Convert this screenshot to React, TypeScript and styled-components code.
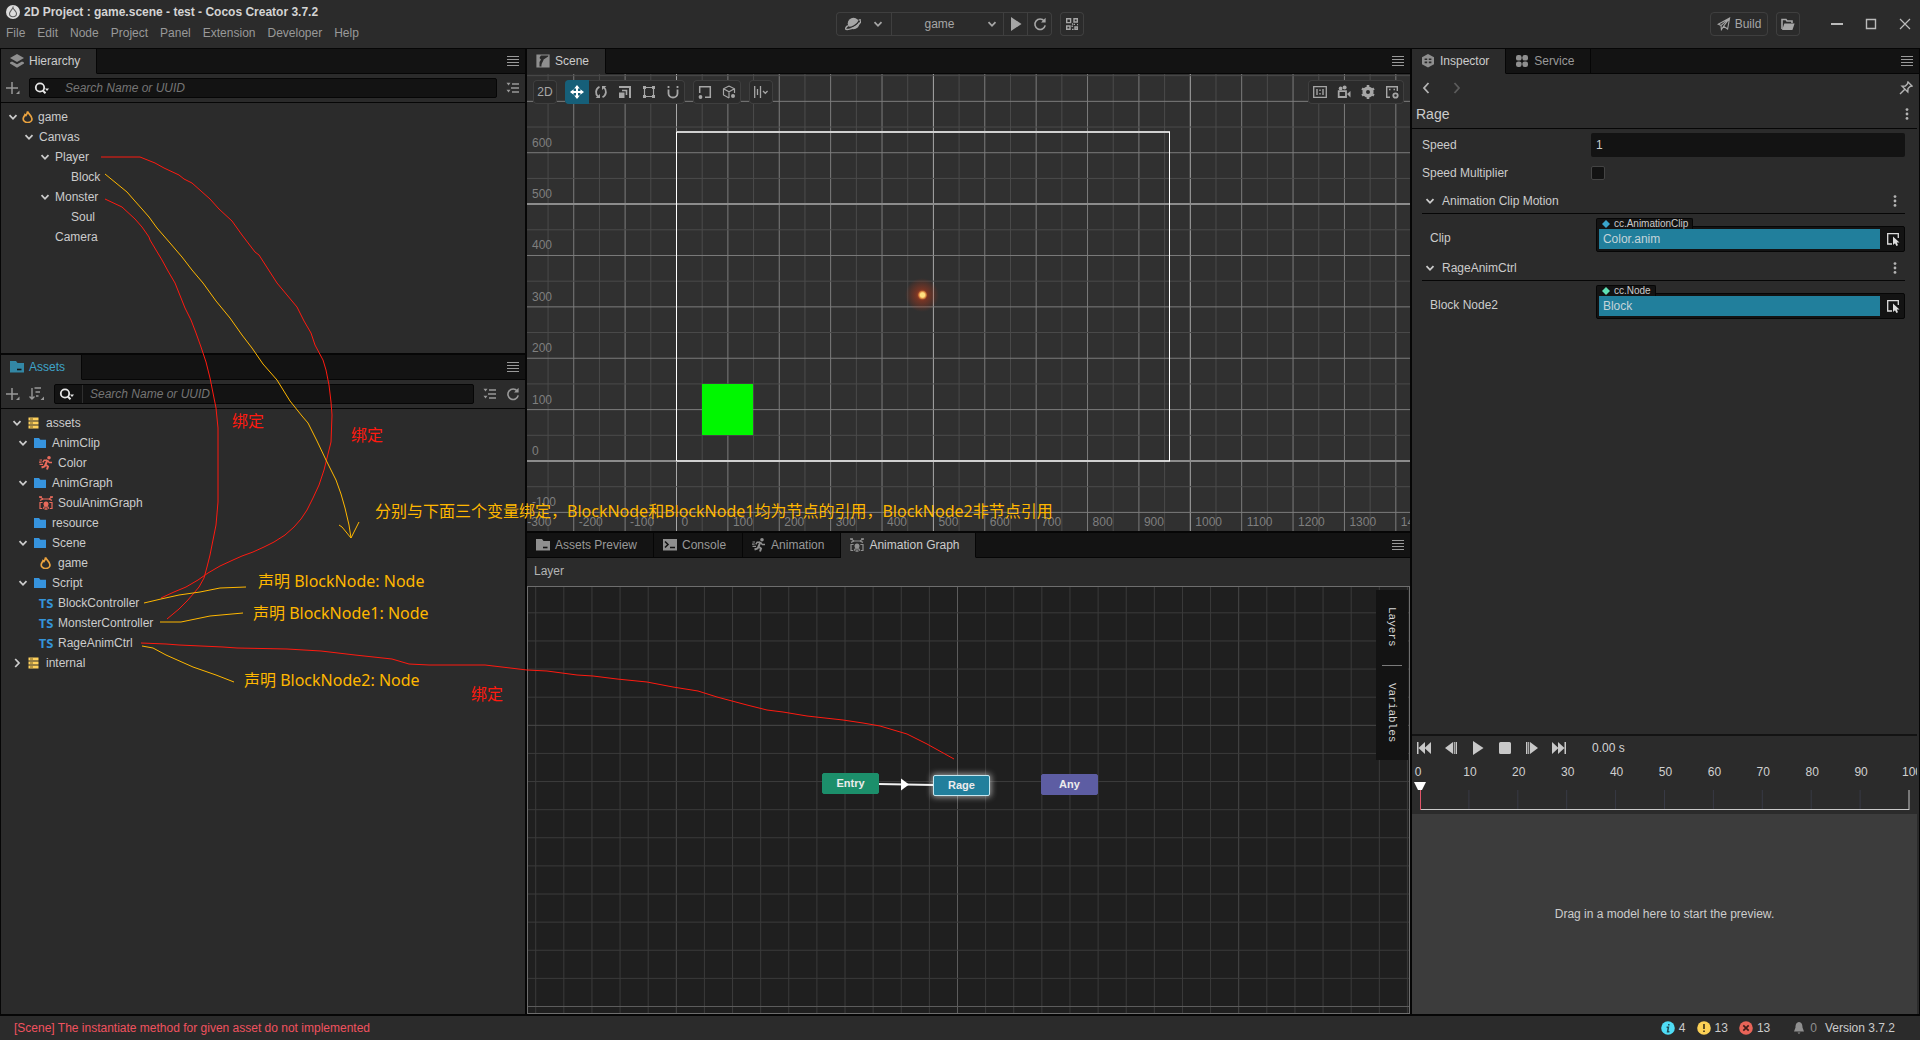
import React from "react";
import styled, { createGlobalStyle, css } from "styled-components";

const c = {
  panel: "#2b2b2b",
  bar: "#131313",
  line: "#060606",
  text: "#cccccc",
  dim: "#999999",
  border: "#3f3f3f",
  blue: "#217f9c",
  red: "#ff1a10",
  amber: "#ffb700",
};

const GlobalStyle = createGlobalStyle`
  *, *::before, *::after { box-sizing: border-box; }
  body { margin: 0; background: #000; overflow: hidden; }
  body, button, input, select {
    font-family: "Liberation Sans", Arial, "Noto Sans CJK SC", sans-serif;
    font-size: 12px;
    line-height: 16px;
  }
  button, input, select { color: inherit; margin: 0; padding: 0; border: 0; background: none; }
  svg { display: block; flex: none; }
`;

/* ---------- Icons ---------- */

type IconProps = { size?: number; box?: number; color?: string; children: React.ReactNode };
const Icon = ({ size = 14, box = 14, color = "currentColor", children }: IconProps) => (
  <svg width={size} height={size} viewBox={`0 0 ${box} ${box}`} fill="none" stroke={color} strokeWidth="1.4" aria-hidden="true">
    {children}
  </svg>
);

const Chevron = ({ open = true }: { open?: boolean }) => (
  <Icon size={10} box={10}>
    <path d={open ? "M1.5 3.2 5 6.8 8.5 3.2" : "M3.2 1 7 5 3.2 9"} strokeWidth="1.8" />
  </Icon>
);
const Burger = () => (
  <Icon size={12} box={12}>
    <path d="M0 1.5H12M0 4.5H12M0 7.5H12M0 10.5H12" strokeWidth="1" />
  </Icon>
);
const Kebab = () => (
  <Icon size={12} box={12}>
    <g fill="currentColor" stroke="none" opacity="0.85">
      <circle cx="6" cy="1.6" r="1.4" /><circle cx="6" cy="6" r="1.4" /><circle cx="6" cy="10.4" r="1.4" />
    </g>
  </Icon>
);
const LayersIcon = () => (
  <Icon>
    <path d="M7 0 14 4 7 8 0 4Z" fill="currentColor" stroke="none" />
    <path d="M0 8.6 2 7.4 7 10.2 12 7.4 14 8.6V9.6L7 13.8 0 9.6Z" fill="currentColor" stroke="none" />
  </Icon>
);
const FolderPanelIcon = () => (
  <Icon>
    <path d="M0 1H6L7.5 3H14V12.5H0Z" fill="currentColor" stroke="none" />
    <path d="M7 9.5H11.5" stroke="#131313" strokeWidth="1.6" />
  </Icon>
);
const SceneIcon = () => (
  <Icon>
    <path d="M1 1H13V13H1Z" strokeWidth="1.2" />
    <path d="M1 1H5L3.5 4 5 5.5 3.5 8V13H1Z" fill="currentColor" stroke="none" />
    <path d="M5.5 13C5.200 9 7 8.600 7.600 5.600L13 2V13Z" fill="currentColor" stroke="none" />
  </Icon>
);
const InspectorIcon = () => (
  <Icon>
    <path d="M7 0 13 3.3V10.2L7 13.6 1 10.2V3.3Z" fill="currentColor" stroke="none" />
    <path d="M3.6 5.2H6.2M7.8 5.2H10.4M3.6 8.4H6.2M7.8 8.4H10.4" stroke="#2b2b2b" strokeWidth="1.6" />
  </Icon>
);
const ServiceIcon = () => (
  <Icon>
    <g fill="currentColor" stroke="none">
      <rect x="1" y="1" width="5.6" height="5.6" rx="2.2" /><rect x="7.4" y="1" width="5.6" height="5.6" rx="2.2" />
      <rect x="1" y="7.4" width="5.6" height="5.6" rx="2.2" /><rect x="7.4" y="7.4" width="5.6" height="5.6" rx="2.2" />
    </g>
  </Icon>
);
const ConsoleIcon = () => (
  <Icon>
    <path d="M0 1H14V12.5H0Z" fill="currentColor" stroke="none" />
    <path d="M2 3.5 5 6.5 2 9.5M7 9.5H12" stroke="#131313" strokeWidth="1.6" />
  </Icon>
);
const RunIcon = () => (
  <Icon>
    <circle cx="10" cy="1.8" r="1.8" fill="currentColor" stroke="none" />
    <path d="M8.5 4 6.500 8.5 9 10.5 8 13.5M6.8 8.500 5.500 10.500 2.500 11.500" strokeWidth="2" />
    <path d="M8.3 4.2H5.2L3.8 6.4M8.8 4.6 10.3 6.6H13" strokeWidth="1.5" />
    <path d="M0.5 4H3M0 6.2H2.6M0.5 8.4H4" strokeWidth="1.2" />
  </Icon>
);
const GraphIcon = () => (
  <Icon>
    <circle cx="7" cy="8" r="2.500" fill="currentColor" stroke="none" />
    <path d="M1 1 4 3H10L13 1M1 4.4 4.2 3M13 4.4 9.8 3M3.6 6.5H1V12.5H3M10.4 6.5H13V12.5H11M4 12.8 5.2 10.8H8.8L10 12.8" strokeWidth="1.2" />
    <path d="M0 1H3M11 1H14M5.5 13H8.5" strokeWidth="1.6" />
  </Icon>
);
const FlameIcon = () => (
  <Icon size={12} box={12} color="#eba33f">
    <path d="M5.600 0.400C6 2.800 10 4.600 10 7.900A4.400 3.600 0 0 1 1.200 7.900C1.200 6 2.600 5.200 3 3.700L3.900 4.500C4.800 3.300 5.400 2 5.600 0.400Z" strokeWidth="1.7" />
  </Icon>
);
const DbIcon = () => (
  <Icon size={12} box={12} color="#fdd05c">
    <path d="M0.500 2H10.500M0.500 6H10.500M0.500 10H10.500" strokeWidth="3" />
    <path d="M2 2H5M2 6H5M2 10H5" stroke="#7a6227" strokeWidth="1" />
  </Icon>
);
const FolderIcon = () => (
  <Icon size={12} box={12}>
    <path d="M0 1H5L6.4 2.8H12V11H0Z" fill="#3693dd" stroke="none" />
  </Icon>
);
const PlusIcon = () => (
  <Icon>
    <path d="M0 7H12M6 1V13" strokeWidth="1.5" />
    <path d="M13.5 9.5V13H10Z" fill="currentColor" stroke="none" />
  </Icon>
);
const SortIcon = () => (
  <Icon size={16} box={16}>
    <path d="M3 2V13M0.5 10.5 3 13 5.5 10.5M5.5 2H12M6.5 6H11M7 10H9.5" strokeWidth="1.4" />
    <path d="M15 10.5V14H11.5Z" fill="currentColor" stroke="none" />
  </Icon>
);
const SearchIcon = () => (
  <Icon size={16} box={16} color="#e6e6e6">
    <circle cx="6" cy="7.5" r="4.2" strokeWidth="1.8" />
    <path d="M8.8 10.5 11.5 13.2" strokeWidth="2" />
    <path d="M11 8.5H15L13 11Z" fill="#e6e6e6" stroke="none" />
  </Icon>
);
const ListIcon = () => (
  <Icon>
    <path d="M6 3H13M5 7H13M6 11H13" strokeWidth="1.3" />
    <path d="M0.5 1.8H4.5L2.5 4.4ZM0.5 8.8H4.5L2.5 11.4Z" fill="currentColor" stroke="none" />
  </Icon>
);
const RefreshIcon = () => (
  <Icon>
    <path d="M11.2 4A5.2 5.2 0 1 0 12.2 8.4" strokeWidth="1.6" />
    <path d="M12.6 0.8V5.4H8Z" fill="currentColor" stroke="none" />
  </Icon>
);
const PlanetIcon = () => (
  <Icon size={16} box={16}>
    <circle cx="8.500" cy="7.500" r="5.800" fill="currentColor" stroke="none" />
    <path d="M2.500 11.500C7 12 12 9 14 5" stroke="#2b2b2b" strokeWidth="1.4" />
    <path d="M2.800 9.600C-0.500 12.500 0 14 3.500 13.400 9 12.500 15 8.500 16 5 16.200 3.900 15.300 3.700 13.800 4" strokeWidth="1.4" />
  </Icon>
);
const PlayIcon = () => (
  <Icon><path d="M2 0 12.5 7 2 14Z" fill="currentColor" stroke="none" /></Icon>
);
const QrIcon = () => (
  <Icon>
    <path d="M1.7 1.7H5.6V5.6H1.7ZM9 1.7H12.3V5H9ZM1.7 9H5V12.3H1.7ZM10 10H12.3V12.3H10Z" />
    <path d="M7.2 8.5V10M7 12.4H8.6M8.6 7.4H10M12 7.6H13M7 7H8" />
  </Icon>
);
const SendIcon = () => (
  <Icon><path d="M1.2 7.2 12.6 1 10.6 12 6.6 9.2 4.4 12.6 4 8.4ZM4.2 8.4 12.4 1.2M6.6 9.2 12.4 1.4" strokeWidth="1.1" /></Icon>
);
const OpenFolderIcon = () => (
  <Icon>
    <path d="M1 12V2.5H5L6 4H11V6" strokeWidth="1.6" />
    <path d="M3.4 6.4H13.6L11.4 13H1Z" fill="currentColor" stroke="none" />
  </Icon>
);
const PinIcon = () => (
  <Icon>
    <path d="M9 1 13 5 11 5.6 9 7.6 8.8 11 3 5.2 6.4 5 8.4 3ZM5.6 8.4 1 13" strokeWidth="1.4" />
  </Icon>
);
const PickIcon = () => (
  <Icon>
    <path d="M6 12H1.7V1.7H12.3V6" strokeWidth="1.3" stroke="#dddddd" />
    <path d="M7 4.5V13L9 11.200 10.400 14 12 13.300 10.800 10.600H13.500Z" fill="#dddddd" stroke="none" />
  </Icon>
);

/* ---------- Header ---------- */

const Shell = styled.div`
  position: relative;
  display: flex;
  flex-direction: column;
  height: 100vh;
  background: ${c.line};
  color: ${c.text};
  overflow: hidden;
`;
const Header = styled.header`
  display: grid;
  grid-template-columns: 1fr auto 1fr;
  height: 48px;
  background: ${c.panel};
  margin-bottom: 1px;
  color: #a6a6a6;
`;
const Brand = styled.div`padding: 4px 6px 0;`;
const AppTitle = styled.h1`
  display: flex;
  align-items: center;
  gap: 4px;
  margin: 0;
  font-size: 12px;
  line-height: 16px;
  color: #d4d4d4;
`;
const MenuBar = styled.nav`
  display: flex;
  gap: 12px;
  margin-top: 5px;
  color: ${c.dim};
`;
const HeadTools = styled.div<{ $end?: boolean }>`
  display: flex;
  align-items: center;
  gap: 8px;
  justify-content: ${(p) => (p.$end ? "flex-end" : "center")};
  padding-right: ${(p) => (p.$end ? "8px" : 0)};
`;
const ToolGroup = styled.div`
  display: flex;
  height: 24px;
  box-shadow: inset 0 0 0 1px ${c.border};
  border-radius: 4px;
  background: ${c.panel};
  overflow: hidden;
`;
const Tool = styled.button<{ $w?: number; $split?: boolean; $on?: boolean }>`
  display: flex;
  align-items: center;
  justify-content: center;
  gap: 12px;
  flex: none;
  width: ${(p) => p.$w ?? 24}px;
  ${(p) => p.$split && css`border-right: 1px solid ${c.border};`}
  ${(p) => p.$on && css`background: #165f79; color: #ffffff;`}
`;
const ScenePicker = styled.label`
  display: flex;
  align-items: center;
  width: 112px;
  padding-right: 6px;
  border-right: 1px solid ${c.border};
`;
const SceneSelect = styled.select`
  appearance: none;
  flex: 1;
  min-width: 0;
  text-align-last: center;
  outline: 0;
`;
const BuildButton = styled.button`
  display: flex;
  align-items: center;
  justify-content: center;
  gap: 4px;
  width: 58px;
  height: 24px;
  border: 1px solid ${c.border};
  border-radius: 4px;
`;
const WindowButtons = styled.div`
  display: flex;
  gap: 20px;
  margin-left: 22px;
  color: #bbbbbb;
`;
const PlainButton = styled.button`
  display: flex;
  align-items: center;
  justify-content: center;
  min-width: 14px;
  height: 16px;
  flex: none;
`;

/* ---------- Dock ---------- */

const Dock = styled.main`
  flex: 1;
  min-height: 0;
  display: grid;
  grid-template-columns: minmax(0, 524fr) minmax(0, 883fr) minmax(0, 507fr);
  gap: 2px;
  padding: 0 1px;
`;
const Column = styled.div<{ $rows: string }>`
  display: grid;
  grid-template-columns: minmax(0, 1fr);
  grid-template-rows: ${(p) => p.$rows};
  gap: 2px;
  min-height: 0;
`;
const Panel = styled.section`
  display: flex;
  flex-direction: column;
  min-height: 0;
  background: ${c.panel};
  overflow: hidden;
`;
const TabBar = styled.div`
  display: flex;
  flex: none;
  height: 25px;
  background: ${c.bar};
  color: ${c.dim};
`;
const TabButton = styled.button<{ $active?: boolean; $accent?: boolean }>`
  display: flex;
  align-items: center;
  gap: 5px;
  padding: 0 16px 1px 9px;
  border-right: 1px solid ${c.line};
  border-bottom: 1px solid ${(p) => (p.$active ? c.panel : c.line)};
  background: ${(p) => (p.$active ? c.panel : c.bar)};
  color: ${(p) => (p.$accent ? "#3ea4c9" : p.$active ? c.text : c.dim)};
  white-space: nowrap;
  svg { color: ${(p) => (p.$accent ? "#3387a5" : "#8f8f8f")}; }
`;
const TabFill = styled.div`
  flex: 1;
  display: flex;
  align-items: center;
  justify-content: flex-end;
  padding-right: 5px;
  border-bottom: 1px solid ${c.line};
`;

type TabDef = { label: string; icon: React.ReactNode; active?: boolean; accent?: boolean };
const Tabs = ({ tabs }: { tabs: TabDef[] }) => (
  <TabBar role="tablist">
    {tabs.map((t) => (
      <TabButton key={t.label} role="tab" aria-selected={!!t.active} $active={t.active} $accent={t.accent}>
        {t.icon}{t.label}
      </TabButton>
    ))}
    <TabFill><PlainButton aria-label="Panel menu"><Burger /></PlainButton></TabFill>
  </TabBar>
);

const SearchBar = styled.div`
  display: flex;
  align-items: center;
  gap: 9px;
  flex: none;
  height: 29px;
  padding: 0 5px;
  border-bottom: 1px solid ${c.line};
  color: ${c.dim};
`;
const SearchBox = styled.label<{ $split?: boolean }>`
  display: flex;
  align-items: center;
  flex: 1;
  height: 20px;
  border: 1px solid ${c.line};
  border-radius: 2px;
  background: ${c.bar};
  input { border-left: 1px solid ${(p) => (p.$split ? "#2f2f2f" : c.bar)}; }
`;
const SearchGlyph = styled.span`
  display: flex;
  width: 27px;
  padding-left: 4px;
`;
const SearchInput = styled.input`
  flex: 1;
  height: 18px;
  min-width: 0;
  padding-left: 7px;
  outline: 0;
  &::placeholder { color: #757575; font-style: italic; opacity: 1; }
`;

const Tree = styled.ul`
  flex: 1;
  margin: 0;
  padding: 4px 0;
  list-style: none;
`;
const TreeRow = styled.li<{ $pad: number; $gap: number }>`
  display: flex;
  align-items: center;
  gap: ${(p) => p.$gap}px;
  height: 20px;
  padding-left: ${(p) => p.$pad}px;
  white-space: nowrap;
`;
const Twisty = styled.span`display: flex; width: 10px;`;
const Glyph = styled.span<{ $tint?: string }>`
  display: flex;
  align-items: center;
  justify-content: center;
  width: 12px;
  color: ${(p) => p.$tint ?? "inherit"};
`;
const TsMark = styled.b`
  color: #3593d8;
  font-family: "Open Sans", sans-serif;
  font-size: 13px;
  line-height: 16px;
`;

type Node = { name: string; depth: number; state?: "open" | "shut"; icon?: React.ReactNode; tint?: string };
const hierarchy: Node[] = [
  { name: "game", depth: 0, state: "open", icon: <FlameIcon /> },
  { name: "Canvas", depth: 1, state: "open" },
  { name: "Player", depth: 2, state: "open" },
  { name: "Block", depth: 3 },
  { name: "Monster", depth: 2, state: "open" },
  { name: "Soul", depth: 3 },
  { name: "Camera", depth: 2 },
];
const ts = <TsMark>TS</TsMark>;
const assets: Node[] = [
  { name: "assets", depth: 0, state: "open", icon: <DbIcon /> },
  { name: "AnimClip", depth: 1, state: "open", icon: <FolderIcon /> },
  { name: "Color", depth: 2, icon: <RunIcon />, tint: "#e96b5c" },
  { name: "AnimGraph", depth: 1, state: "open", icon: <FolderIcon /> },
  { name: "SoulAnimGraph", depth: 2, icon: <GraphIcon />, tint: "#e96b5c" },
  { name: "resource", depth: 1, icon: <FolderIcon /> },
  { name: "Scene", depth: 1, state: "open", icon: <FolderIcon /> },
  { name: "game", depth: 2, icon: <FlameIcon /> },
  { name: "Script", depth: 1, state: "open", icon: <FolderIcon /> },
  { name: "BlockController", depth: 2, icon: ts },
  { name: "MonsterController", depth: 2, icon: ts },
  { name: "RageAnimCtrl", depth: 2, icon: ts },
  { name: "internal", depth: 0, state: "shut", icon: <DbIcon /> },
];
const TreeView = ({ nodes, base, step, gap }: { nodes: Node[]; base: number; step: number; gap: number }) => (
  <Tree>
    {nodes.map((n, i) => (
      <TreeRow key={i} $pad={base + step * n.depth} $gap={n.icon ? gap : gap + 1}>
        <Twisty>{n.state && <Chevron open={n.state === "open"} />}</Twisty>
        {n.icon && <Glyph $tint={n.tint}>{n.icon}</Glyph>}
        {n.name}
      </TreeRow>
    ))}
  </Tree>
);

/* ---------- Scene view ---------- */

const SceneView = styled.div`
  position: relative;
  flex: 1;
  min-height: 0;
  overflow: hidden;
  background: #303030;
  font-size: 12px;
`;
const SceneTools = styled.div<{ $side: "left" | "right" }>`
  position: absolute;
  top: 6px;
  ${(p) => p.$side}: 6px;
  display: flex;
  gap: 8px;
  color: #a6a6a6;
`;
const UNIT = 51.38;
const OX = 149.5;
const OY = 387;
const range = (a: number, b: number) => Array.from({ length: b - a + 1 }, (_, i) => a + i);
const gridTone = (k: number) => (k % 10 === 0 ? "#a8a8a8" : k % 2 === 0 ? "#7c7c7c" : "#4b4b4b");

const SceneCanvas = () => (
  <svg width="100%" height="100%" aria-label="Scene grid">
    <defs>
      <radialGradient id="glow">
        <stop offset="0" stopColor="#ff6a2a" stopOpacity="0.85" />
        <stop offset="0.35" stopColor="#b8391a" stopOpacity="0.5" />
        <stop offset="1" stopColor="#b8391a" stopOpacity="0" />
      </radialGradient>
      <radialGradient id="core">
        <stop offset="0.5" stopColor="#ffe080" />
        <stop offset="1" stopColor="#ff9a3c" stopOpacity="0.3" />
      </radialGradient>
    </defs>
    {range(-6, 100).filter((k) => k % 2).concat(range(-6, 100).filter((k) => k % 2 === 0)).map((k) => (
      <line key={`v${k}`} x1={OX + (k * UNIT) / 2} x2={OX + (k * UNIT) / 2} y1="0" y2="100%" stroke={gridTone(k)} />
    ))}
    {range(-20, 16).map((k) => (
      <line key={`h${k}`} x1="0" x2="100%" y1={OY - (k * UNIT) / 2} y2={OY - (k * UNIT) / 2} stroke={k % 10 ? gridTone(k) : "#8c8c8c"} strokeWidth={k % 10 ? 1 : 2} />
    ))}
    <g fill="#7f7f7f">
      {range(-1, 6).map((k) => <text key={k} x="5" y={OY - k * UNIT - 6}>{k * 100}</text>)}
      {range(-3, 14).map((k) => <text key={k} x={OX + k * UNIT + 5} y="452">{k * 100}</text>)}
    </g>
    <path d={`M${OX} 58H643M${OX} ${OY}H643`} stroke="#d0d0d0" strokeWidth="2" />
    <path d={`M${OX} 58V${OY}M642.5 58V${OY}`} stroke="#ffffff" strokeWidth="1" />
    <rect x="175" y="310" width="51" height="51" fill="#00f700" />
    <circle cx="395" cy="221" r="17" fill="url(#glow)" />
    <circle cx="395.5" cy="221" r="4.500" fill="url(#core)" />
  </svg>
);

/* ---------- Animation graph ---------- */

const LayerBar = styled.div`
  flex: none;
  height: 28px;
  padding: 5px 7px;
  color: #b4b4b4;
`;
const GraphView = styled.div`
  position: relative;
  flex: 1;
  min-height: 0;
  border: 1px solid #6e6e6e;
  background: #1f1f1f;
  overflow: hidden;
`;
const GraphNode = styled.button<{ $x: number; $y: number; $bg: string; $selected?: boolean }>`
  position: absolute;
  left: ${(p) => p.$x}px;
  top: ${(p) => p.$y}px;
  width: 57px;
  height: 21px;
  padding-bottom: 1px;
  border: 1px solid ${(p) => (p.$selected ? "#c3e6ef" : p.$bg)};
  border-radius: 2px;
  background: ${(p) => p.$bg};
  color: #ececec;
  font-size: 11px;
  font-weight: bold;
  ${(p) => p.$selected && css`box-shadow: 0 0 6px 1px rgba(255, 255, 255, 0.6);`}
`;
const SideTabs = styled.div`
  position: absolute;
  top: 3px;
  right: 1px;
  display: flex;
  flex-direction: column;
  align-items: center;
  width: 32px;
  height: 170px;
  background: ${c.bar};
`;
const SideTab = styled.button`
  flex: 1 1 auto;
  width: 20px;
  writing-mode: vertical-rl;
  font-family: "Liberation Mono", "Courier New", monospace;
  font-size: 11px;
  line-height: 20px;
  color: #d6d6d6;
  & + & { border-top: 1px solid #7a7a7a; }
`;
const GRID = 28.12;
const graphTone = (k: number) => (k === 0 ? "#5c5c5c" : k % 10 === 0 ? "#494949" : "#3b3b3b");
const GraphGrid = () => (
  <svg width="100%" height="100%" aria-hidden="true">
    {range(-15, 80).map((k) => (
      <line key={`v${k}`} x1={429.5 + k * GRID} x2={429.5 + k * GRID} y1="0" y2="100%" stroke={graphTone(k)} />
    ))}
    {range(-14, 30).map((k) => (
      <line key={`h${k}`} x1="0" x2="100%" y1={419.5 + k * GRID} y2={419.5 + k * GRID} stroke={graphTone(k)} />
    ))}
    <path d="M350 197 406 198" stroke="#f2f2f2" strokeWidth="2" />
    <path d="M373 191.5 381 197.5 373 203.5Z" fill="#ffffff" />
  </svg>
);

/* ---------- Inspector ---------- */

const InspectorBody = styled.div`
  flex: 1;
  min-height: 0;
  padding-right: 2px;
`;
const InspectorNav = styled.div`
  display: flex;
  align-items: center;
  gap: 17px;
  height: 28px;
  padding: 0 4px 0 7px;
  color: #b4b4b4;
`;
const Faded = styled.span`flex: 1; display: flex; color: #5c5c5c;`;
const InspectorTitle = styled.div`
  display: flex;
  align-items: center;
  justify-content: space-between;
  height: 27px;
  padding: 0 4px 3px 4px;
  border-bottom: 1px solid ${c.line};
  font-size: 14px;
`;
const PropList = styled.div`padding: 2px 12px 0 10px;`;
const PropRow = styled.div`
  display: grid;
  grid-template-columns: 35% 65%;
  align-items: center;
  height: 28px;
`;
const NumberInput = styled.input`
  height: 24px;
  padding: 0 5px;
  border-radius: 2px;
  background: ${c.bar};
  outline: 0;
`;
const Check = styled.input`
  appearance: none;
  width: 14px;
  height: 14px;
  border: 1px solid #444444;
  border-radius: 2px;
  background: ${c.bar};
`;
const SectionHead = styled.div`
  display: flex;
  align-items: center;
  gap: 7px;
  height: 27px;
  padding: 1px 4px 0 3px;
  border-bottom: 1px solid ${c.line};
  span { flex: 1; }
`;
const RefRow = styled.div`
  display: grid;
  grid-template-columns: 36% 64%;
  height: 40px;
  padding-top: 4px;
`;
const RefLabel = styled.label`padding: 12px 0 0 8px;`;
const RefField = styled.div`display: flex; flex-direction: column; align-items: flex-start;`;
const TypeTag = styled.span`
  position: relative;
  z-index: 1;
  display: flex;
  align-items: center;
  gap: 4px;
  height: 11px;
  padding: 0 4px 0 5px;
  margin-bottom: -3px;
  border: 1px solid ${c.line};
  border-bottom: 0;
  border-radius: 2px 2px 0 0;
  background: ${c.bar};
  font-size: 10px;
  line-height: 10px;
`;
const RefBox = styled.div`
  display: flex;
  align-items: center;
  align-self: stretch;
  gap: 6px;
  height: 26px;
  padding: 0 4px 0 2px;
  border: 1px solid ${c.line};
  border-radius: 2px;
  background: ${c.bar};
`;
const RefValue = styled.input`
  flex: 1;
  min-width: 0;
  height: 20px;
  padding: 0 4px;
  background: ${c.blue};
  color: #c4d4d9;
  outline: 0;
`;
const Reference = ({ id, label, type, value, tint }: { id: string; label: string; type: string; value: string; tint: string }) => (
  <RefRow>
    <RefLabel htmlFor={id}>{label}</RefLabel>
    <RefField>
      <TypeTag>
        <svg width="8" height="8" viewBox="0 0 8 8" aria-hidden="true"><path d="M4 0 8 4 4 8 0 4Z" fill={tint} /></svg>
        {type}
      </TypeTag>
      <RefBox>
        <RefValue id={id} readOnly value={value} />
        <PlainButton aria-label={`Pick ${label}`}><PickIcon /></PlainButton>
      </RefBox>
    </RefField>
  </RefRow>
);
const Section = ({ title, children }: { title: string; children: React.ReactNode }) => (
  <div>
    <SectionHead><Chevron /><span>{title}</span><Kebab /></SectionHead>
    {children}
  </div>
);

const Preview = styled.div`
  flex: none;
  margin-right: 2px;
  border-top: 2px solid #131313;
  overflow: hidden;
`;
const Transport = styled.div`
  display: flex;
  align-items: center;
  gap: 13px;
  height: 24px;
  padding-left: 5px;
  color: #c8c8c8;
  output { margin-left: 13px; color: #d4d4d4; }
`;
const Ruler = styled.div`
  height: 54px;
  padding: 0 8px;
  svg { overflow: visible; }
`;
const PreviewStage = styled.div`
  display: flex;
  align-items: center;
  justify-content: center;
  height: 200px;
  background: #3c3c3c;
`;
const transport: [string, string][] = [
  ["First frame", "M0 1H1.5V13H0ZM8 1V13L1.5 7ZM14 1V13L7.5 7Z"],
  ["Previous frame", "M9 1V13L1 7ZM9.8 1H10.8V13H9.8ZM11.6 1H13V13H11.6Z"],
  ["Play", "M2 0 12.5 7 2 14Z"],
  ["Stop", "M2.5 1H11.5A1.5 1.5 0 0 1 13 2.5V11.5A1.5 1.5 0 0 1 11.5 13H2.5A1.5 1.5 0 0 1 1 11.5V2.5A1.5 1.5 0 0 1 2.5 1Z"],
  ["Next frame", "M5 1V13L13 7ZM3.2 1H4.2V13H3.2ZM1 1H2.4V13H1Z"],
  ["Last frame", "M14 1H12.5V13H14ZM6 1V13L12.5 7ZM0 1V13L6.5 7Z"],
];

/* ---------- Status bar ---------- */

const StatusBar = styled.footer`
  display: flex;
  align-items: center;
  justify-content: space-between;
  height: 24px;
  margin-top: 2px;
  padding: 0 25px 0 14px;
  background: ${c.panel};
`;
const StatusError = styled.span`color: #f0525f;`;
const StatusItems = styled.div`display: flex; align-items: center; gap: 11px;`;
const StatusItem = styled.span<{ $dim?: boolean }>`
  display: flex;
  align-items: center;
  gap: 4px;
  color: ${(p) => (p.$dim ? "#8f8f8f" : c.text)};
`;
const VersionGroup = styled.div`display: flex; gap: 8px; margin-left: 11px;`;

/* ---------- Hand-drawn notes ---------- */

const Notes = styled.div`
  position: absolute;
  inset: 0;
  pointer-events: none;
  svg { position: absolute; inset: 0; }
`;
const Note = styled.span<{ $x: number; $y: number; $color: string }>`
  position: absolute;
  left: ${(p) => p.$x}px;
  top: ${(p) => p.$y}px;
  color: ${(p) => p.$color};
  font-family: "Noto Sans", "Noto Sans CJK SC", sans-serif;
  font-size: 16px;
  line-height: 24px;
  white-space: nowrap;
`;
const redStrokes = [
  "101,157 140,157 155,163 164,168 179,175 184,179 192,183 201,191 210,199 219,209 232,221 242,235 255,252 259,255 268,269 277,283 287,295 297,307 304,321 311,333 315,345 323,360 326,370 329,385 331,402 332,415 331,442 326,462 324,470 319,485 313,498 307,510 301,519 294,527 285,535 274,542 264,547 253,552 242,556 233,560 220,566 208,573 198,580 186,587 174,592 161,598",
  "105,199 122,207 135,219 142,227 149,237 150,240 162,260 168,271 175,283 179,293 185,308 191,320 196,333 201,347 206,362 210,378 213,393 216,408 218,428 218,502 216,525 213,540 210,555 207,567 204,578 199,587 194,593 187,601 179,609 167,619",
  "141,643 166,644 179,645 223,647 237,648 287,649 321,651 355,655 392,659 409,664 429,665 485,665 527,670 547,671 577,675 593,676 617,679 647,682 673,687 698,691 717,697 732,701 747,705 767,710 783,712 807,716 843,720 863,723 880,726 907,734 927,744 954,759",
];
const amberStrokes = [
  "105,174 127,192 134,200 142,209 149,217 157,228 170,243 182,257 192,270 203,283 216,301 230,318 242,335 252,348 263,364 277,380 290,401 302,416 308,423 317,441 326,460 331,470 336,480 341,494 345,508 349,525 351,538",
  "339,525 342,527 351,538 359,522",
  "144,603 161,599 179,595 200,592 220,588 246,587",
  "160,622 181,622 210,616 243,613",
  "142,646 153,648 166,655 193,667 216,675 234,682",
];

export default function App() {
  return (
    <Shell>
      <GlobalStyle />
      <Header>
        <Brand>
          <AppTitle>
            <Icon>
              <circle cx="7" cy="7" r="7" fill="#dcdcdc" stroke="none" />
              <path d="M7 2.5C7.5 5 10.5 6 10.5 8.5A3.5 3.2 0 0 1 3.5 8.5C3.5 6.5 6 5 7 2.5Z" stroke="#5e5e5e" strokeWidth="1.1" />
            </Icon>
            2D Project : game.scene - test - Cocos Creator 3.7.2
          </AppTitle>
          <MenuBar>
            {["File", "Edit", "Node", "Project", "Panel", "Extension", "Developer", "Help"].map((m) => (
              <button key={m}>{m}</button>
            ))}
          </MenuBar>
        </Brand>
        <HeadTools>
          <ToolGroup>
            <Tool $w={56} $split aria-label="Preview platform" aria-haspopup="menu"><PlanetIcon /><Chevron /></Tool>
            <ScenePicker>
              <SceneSelect aria-label="Scene" defaultValue="game"><option value="game">game</option></SceneSelect>
              <Chevron />
            </ScenePicker>
            <Tool $split aria-label="Play"><PlayIcon /></Tool>
            <Tool aria-label="Reload"><RefreshIcon /></Tool>
          </ToolGroup>
          <ToolGroup><Tool aria-label="QR code"><QrIcon /></Tool></ToolGroup>
        </HeadTools>
        <HeadTools $end>
          <BuildButton><SendIcon />Build</BuildButton>
          <ToolGroup><Tool aria-label="Open build folder"><OpenFolderIcon /></Tool></ToolGroup>
          <WindowButtons>
            <PlainButton aria-label="Minimize"><Icon><path d="M1 7H13" strokeWidth="2" /></Icon></PlainButton>
            <PlainButton aria-label="Maximize"><Icon><path d="M2.5 2.5H11.5V11.5H2.5Z" strokeWidth="1.4" /></Icon></PlainButton>
            <PlainButton aria-label="Close"><Icon><path d="M2 2 12 12M12 2 2 12" strokeWidth="1.2" /></Icon></PlainButton>
          </WindowButtons>
        </HeadTools>
      </Header>

      <Dock>
        <Column $rows="minmax(0, 304fr) minmax(0, 659fr)">
          <Panel>
            <Tabs tabs={[{ label: "Hierarchy", icon: <LayersIcon />, active: true }]} />
            <SearchBar>
              <PlainButton aria-label="Create node"><PlusIcon /></PlainButton>
              <SearchBox>
                <SearchGlyph><SearchIcon /></SearchGlyph>
                <SearchInput placeholder="Search Name or UUID" aria-label="Search hierarchy" />
              </SearchBox>
              <PlainButton aria-label="Expand"><ListIcon /></PlainButton>
            </SearchBar>
            <TreeView nodes={hierarchy} base={7} step={16} gap={4} />
          </Panel>
          <Panel>
            <Tabs tabs={[{ label: "Assets", icon: <FolderPanelIcon />, active: true, accent: true }]} />
            <SearchBar>
              <PlainButton aria-label="Create asset"><PlusIcon /></PlainButton>
              <PlainButton aria-label="Sort"><SortIcon /></PlainButton>
              <SearchBox $split>
                <SearchGlyph><SearchIcon /></SearchGlyph>
                <SearchInput placeholder="Search Name or UUID" aria-label="Search assets" />
              </SearchBox>
              <PlainButton aria-label="Expand"><ListIcon /></PlainButton>
              <PlainButton aria-label="Refresh"><RefreshIcon /></PlainButton>
            </SearchBar>
            <TreeView nodes={assets} base={11} step={6} gap={6} />
          </Panel>
        </Column>

        <Column $rows="minmax(0, 482fr) minmax(0, 481fr)">
          <Panel>
            <Tabs tabs={[{ label: "Scene", icon: <SceneIcon />, active: true }]} />
            <SceneView>
              <SceneCanvas />
              <SceneTools $side="left">
                <ToolGroup><Tool>2D</Tool></ToolGroup>
                <ToolGroup>
                  <Tool $on aria-label="Move">
                    <Icon><path d="M7 2V12M2 7H12" strokeWidth="2" /><path d="M7 0 9.8 3.6H4.2ZM7 14 9.8 10.4H4.2ZM0 7 3.6 4.2V9.8ZM14 7 10.4 4.2V9.8Z" fill="currentColor" stroke="none" /></Icon>
                  </Tool>
                  <Tool aria-label="Rotate">
                    <Icon><path d="M5.5 1.8C1.2 4 1.2 9 4 11.6M8.5 12.2C12.8 10 12.8 5 10 2.4" strokeWidth="1.8" /><path d="M1.6 13H6V9ZM12.4 1H8V5Z" fill="currentColor" stroke="none" /></Icon>
                  </Tool>
                  <Tool aria-label="Scale">
                    <Icon><path d="M1 2H12V13" strokeWidth="2" /><path d="M1 7.5H6.5V13H1Z" fill="currentColor" stroke="none" /><path d="M4 5.5H8.5V10" strokeWidth="1.6" /></Icon>
                  </Tool>
                  <Tool aria-label="Rect">
                    <Icon><path d="M2.5 2.5H11.5V11.5H2.5Z" strokeWidth="1.2" /><path d="M1 1H4V4H1ZM10 1H13V4H10ZM1 10H4V13H1ZM10 10H13V13H10Z" fill="currentColor" stroke="none" /></Icon>
                  </Tool>
                  <Tool aria-label="Snap">
                    <Icon><path d="M2.5 1V3M11.5 1V3M2.5 4.5V8.5A4.5 4 0 0 0 11.5 8.5V4.5" strokeWidth="1.8" /></Icon>
                  </Tool>
                </ToolGroup>
                <ToolGroup>
                  <Tool aria-label="Pivot">
                    <Icon><path d="M1.7 8V1.7H12.3V12.3H7" strokeWidth="1.5" /><circle cx="2.5" cy="12" r="1.9" fill="currentColor" stroke="none" /></Icon>
                  </Tool>
                  <Tool aria-label="Coordinate">
                    <Icon><path d="M7 1 12.5 3.8V8M7 1 1.5 3.8V10L7 13M1.5 3.8 7 6.8 12.5 3.8M7 6.8V13" strokeWidth="1.2" /><circle cx="11" cy="11" r="2" fill="currentColor" stroke="none" /></Icon>
                  </Tool>
                </ToolGroup>
                <ToolGroup>
                  <Tool aria-label="Align">
                    <Icon><path d="M0.7 1V13M3.5 4V10M6.5 1V13" strokeWidth="1.3" /><path d="M9 6 11.3 8.3 13.6 6" strokeWidth="1.3" /></Icon>
                  </Tool>
                </ToolGroup>
              </SceneTools>
              <SceneTools $side="right">
                <ToolGroup>
                  <Tool aria-label="Resolution">
                    <Icon><path d="M0.7 1.7H13.3V12.3H0.7Z" strokeWidth="1.3" /><path d="M4 4V10M10 4V10M7 4.5V6M7 8V9.5" strokeWidth="1.4" /></Icon>
                  </Tool>
                  <Tool aria-label="Camera">
                    <Icon><path d="M1.7 6.2H9V12H1.7Z" strokeWidth="1.8" /><circle cx="3.6" cy="3.4" r="1.9" fill="currentColor" stroke="none" /><circle cx="7.6" cy="2.6" r="2" fill="currentColor" stroke="none" /><path d="M10 9 13.5 6V12.5Z" fill="currentColor" stroke="none" /></Icon>
                  </Tool>
                  <Tool aria-label="Gizmo settings">
                    <Icon><circle cx="7" cy="7" r="3.8" strokeWidth="3.6" /><path d="M7 0V2M7 12V14M1 3.5 2.6 4.5M11.4 9.5 13 10.5M1 10.5 2.6 9.5M11.4 4.5 13 3.5" strokeWidth="2.6" /></Icon>
                  </Tool>
                  <Tool aria-label="Scene settings">
                    <Icon><path d="M12.3 6V1.7H1.7V12.3H5M4 4.5H5.5M8.5 4.5H10" /><circle cx="10.5" cy="10.5" r="2.2" strokeWidth="1.8" /></Icon>
                  </Tool>
                </ToolGroup>
              </SceneTools>
            </SceneView>
          </Panel>
          <Panel>
            <Tabs
              tabs={[
                { label: "Assets Preview", icon: <FolderPanelIcon /> },
                { label: "Console", icon: <ConsoleIcon /> },
                { label: "Animation", icon: <RunIcon /> },
                { label: "Animation Graph", icon: <GraphIcon />, active: true },
              ]}
            />
            <LayerBar>Layer</LayerBar>
            <GraphView>
              <GraphGrid />
              <GraphNode $x={294} $y={186} $bg="#1c8f6b">Entry</GraphNode>
              <GraphNode $x={405} $y={188} $bg={c.blue} $selected>Rage</GraphNode>
              <GraphNode $x={513} $y={187} $bg="#5d5da3">Any</GraphNode>
              <SideTabs>
                <SideTab>Layers</SideTab>
                <SideTab>Variables</SideTab>
              </SideTabs>
            </GraphView>
          </Panel>
        </Column>

        <Panel>
          <Tabs tabs={[{ label: "Inspector", icon: <InspectorIcon />, active: true }, { label: "Service", icon: <ServiceIcon /> }]} />
          <InspectorBody>
            <InspectorNav>
              <PlainButton aria-label="Back"><Icon><path d="M9.5 2 5 7 9.5 12" strokeWidth="1.8" /></Icon></PlainButton>
              <Faded><PlainButton aria-label="Forward"><Icon><path d="M4.5 2 9 7 4.5 12" strokeWidth="1.8" /></Icon></PlainButton></Faded>
              <PlainButton aria-label="Lock"><PinIcon /></PlainButton>
            </InspectorNav>
            <InspectorTitle>Rage<Kebab /></InspectorTitle>
            <PropList>
              <PropRow><label htmlFor="speed">Speed</label><NumberInput id="speed" defaultValue="1" /></PropRow>
              <PropRow><label htmlFor="mult">Speed Multiplier</label><Check id="mult" type="checkbox" /></PropRow>
              <Section title="Animation Clip Motion">
                <Reference id="clip" label="Clip" type="cc.AnimationClip" value="Color.anim" tint="#3aa5cc" />
              </Section>
              <Section title="RageAnimCtrl">
                <Reference id="node2" label="Block Node2" type="cc.Node" value="Block" tint="#5fe0b4" />
              </Section>
            </PropList>
          </InspectorBody>
          <Preview>
            <Transport>
              {transport.map(([name, d]) => (
                <PlainButton key={name} aria-label={name}>
                  <Icon><path d={d} fill="currentColor" stroke="none" /></Icon>
                </PlainButton>
              ))}
              <output>0.00 s</output>
            </Transport>
            <Ruler>
              <svg width="100%" height="54" aria-label="Timeline">
                {range(1, 9).map((i) => (
                  <line key={i} x1={`${i * 10}%`} x2={`${i * 10}%`} y1="30" y2="49" stroke="#383a45" />
                ))}
                <g fill="#d0d0d0" textAnchor="middle">
                  {range(1, 9).map((i) => <text key={i} x={`${i * 10}%`} dx="1" y="16">{i * 10}</text>)}
                  <text x="-2" y="16">0</text>
                  <text x="100%" dx="3" y="16">100</text>
                </g>
                <line x1="0" x2="100%" y1="49.5" y2="49.5" stroke="#c9c9c9" />
                <line x1="100%" x2="100%" y1="30" y2="50" stroke="#c9c9c9" />
                <line x1="0.5" x2="0.5" y1="28" y2="50" stroke="#e0566a" />
                <path d="M-6 22H6L2 30H-2Z" fill="#ffffff" />
              </svg>
            </Ruler>
            <PreviewStage>Drag in a model here to start the preview.</PreviewStage>
          </Preview>
        </Panel>
      </Dock>

      <StatusBar>
        <StatusError>[Scene] The instantiate method for given asset do not implemented</StatusError>
        <StatusItems>
          <StatusItem>
            <Icon><circle cx="7" cy="7" r="6.8" fill="#4fdcf5" stroke="none" /><path d="M7.8 3V4.6M5.6 6.2H7.4L6.6 10.8H8.4" stroke="#1f4b55" strokeWidth="1.5" /></Icon>4
          </StatusItem>
          <StatusItem>
            <Icon><circle cx="7" cy="7" r="6.8" fill="#fbd055" stroke="none" /><path d="M7 3V8M7 9.5V11" stroke="#44381a" strokeWidth="1.7" /></Icon>13
          </StatusItem>
          <StatusItem>
            <Icon><circle cx="7" cy="7" r="6.8" fill="#e96458" stroke="none" /><path d="M4.3 4.3 9.7 9.7M9.7 4.3 4.3 9.7" stroke="#3f1d1a" strokeWidth="1.7" /></Icon>13
          </StatusItem>
          <VersionGroup>
            <StatusItem $dim>
              <Icon><path d="M7 1C4 1.5 3.5 4 3.5 6.5L2 10.5H12L10.5 6.5C10.5 4 10 1.5 7 1ZM5.5 11.5H8.5L7 13Z" fill="currentColor" stroke="none" /></Icon>0
            </StatusItem>
            <span>Version 3.7.2</span>
          </VersionGroup>
        </StatusItems>
      </StatusBar>

      <Notes>
        <svg width="100%" height="100%" fill="none" strokeWidth="1" aria-hidden="true">
          {redStrokes.map((p) => <polyline key={p} points={p} stroke={c.red} />)}
          {amberStrokes.map((p) => <polyline key={p} points={p} stroke={c.amber} />)}
        </svg>
        <Note $x={232} $y={409} $color={c.red}>绑定</Note>
        <Note $x={351} $y={423} $color={c.red}>绑定</Note>
        <Note $x={471} $y={682} $color={c.red}>绑定</Note>
        <Note $x={258} $y={569} $color={c.amber}>声明 BlockNode: Node</Note>
        <Note $x={253} $y={601} $color={c.amber}>声明 BlockNode1: Node</Note>
        <Note $x={244} $y={668} $color={c.amber}>声明 BlockNode2: Node</Note>
        <Note $x={375} $y={499} $color={c.amber}>分别与下面三个变量绑定，BlockNode和BlockNode1均为节点的引用，BlockNode2非节点引用</Note>
      </Notes>
    </Shell>
  );
}
